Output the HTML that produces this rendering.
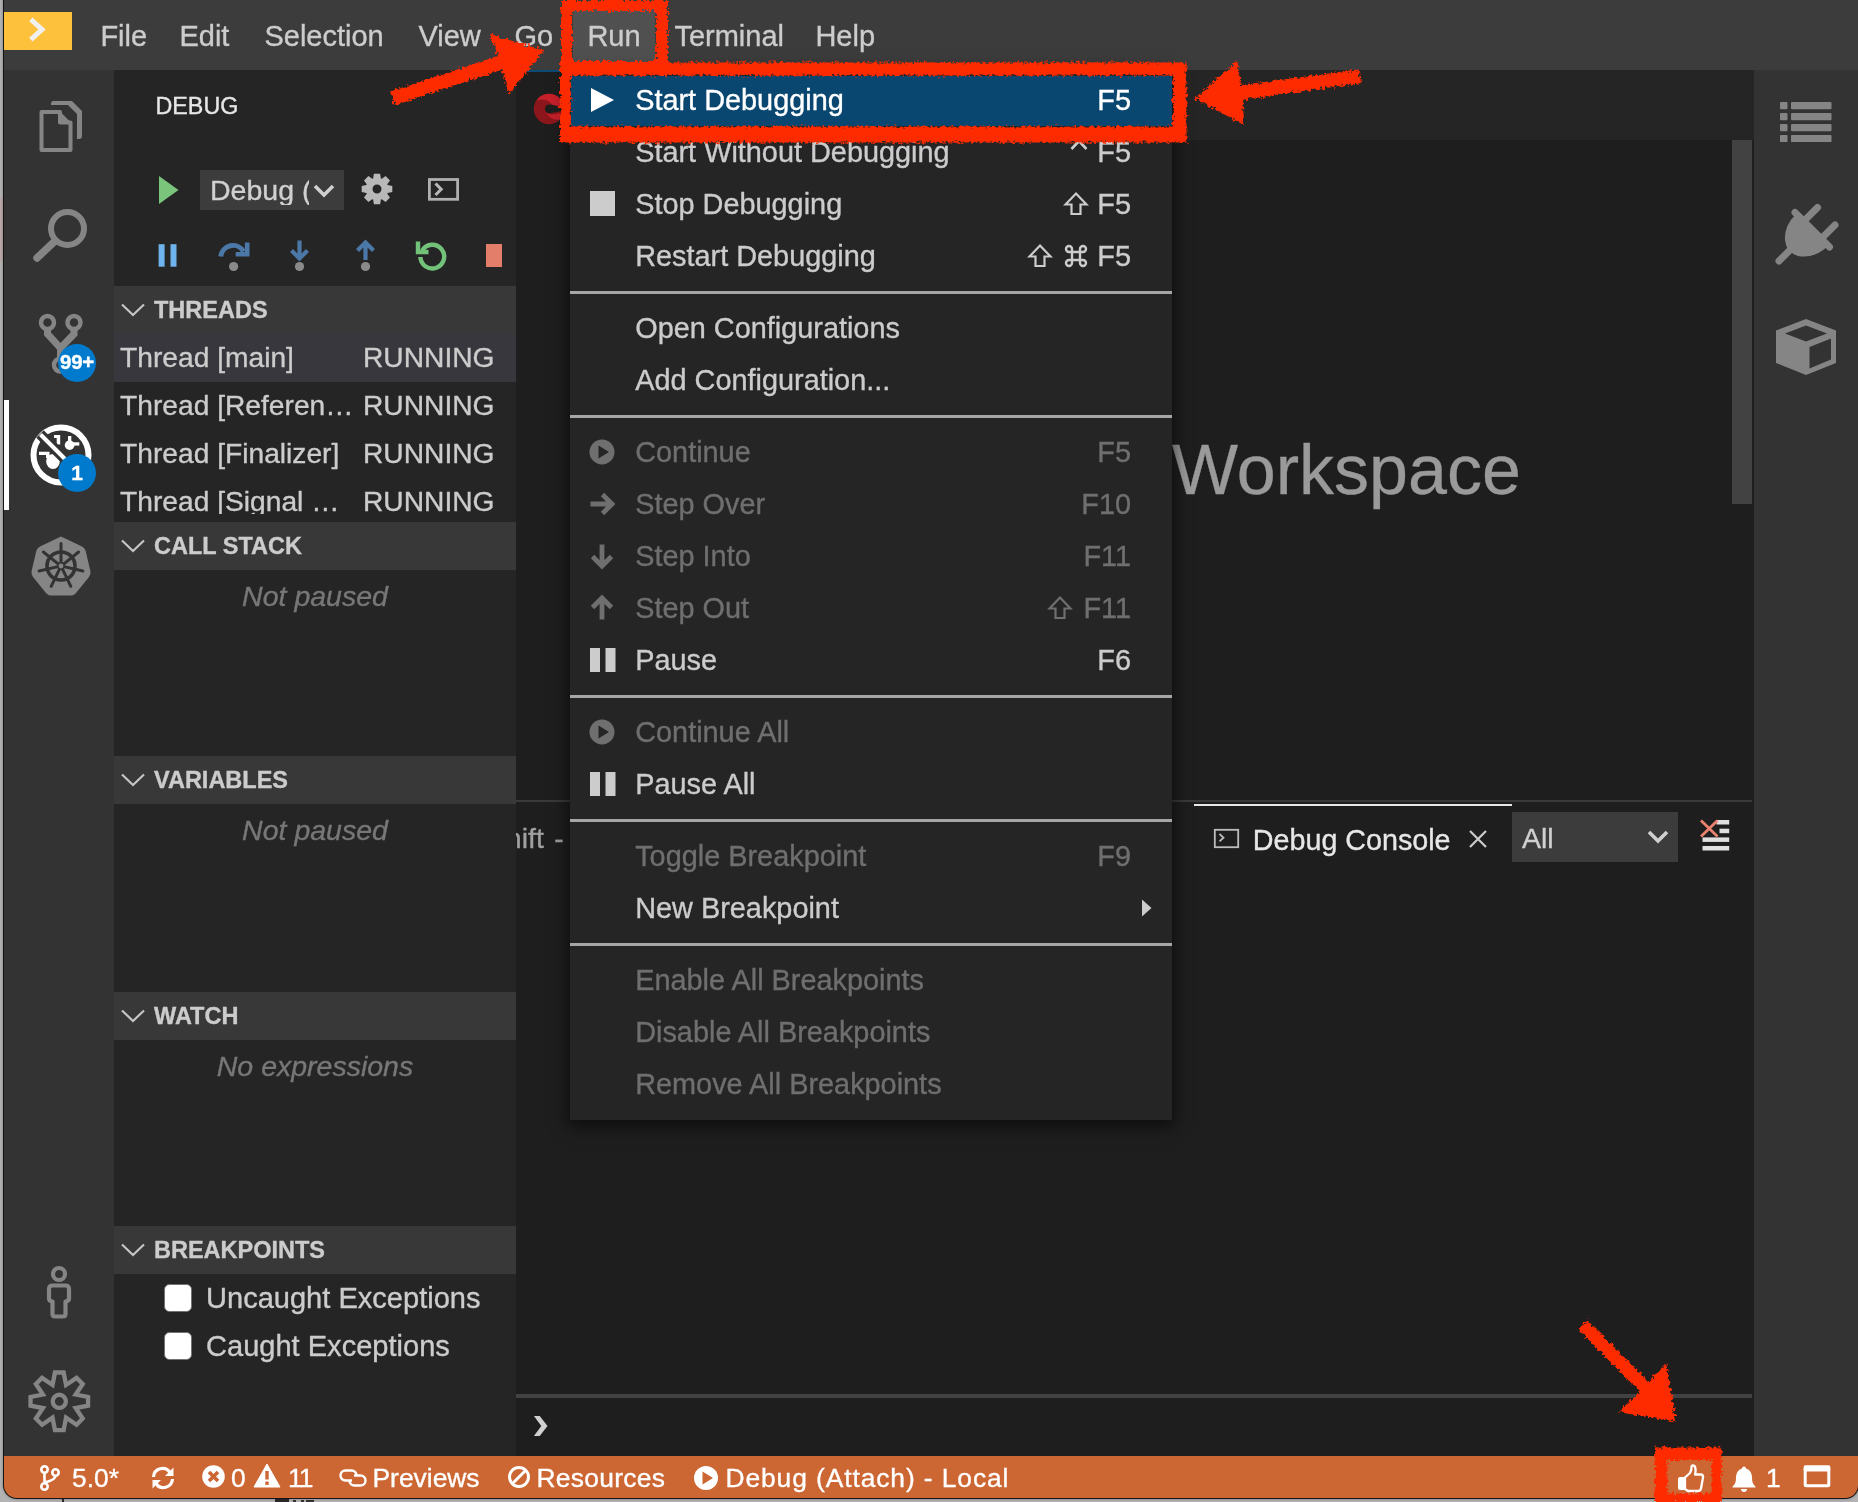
<!DOCTYPE html>
<html><head><meta charset="utf-8"><title>Debug</title>
<style>
*{box-sizing:border-box;margin:0;padding:0}
html,body{width:1858px;height:1502px;overflow:hidden;background:#b3b3b3}
body{-webkit-text-stroke:0.350px currentColor;position:relative;font-family:"Liberation Sans",sans-serif;font-size:28.5px;color:#ccc;line-height:1;-webkit-font-smoothing:antialiased}
.a{position:absolute}
.t{position:absolute;white-space:nowrap}
#win{left:4px;top:0;width:1854px;height:1497.500px;background:#1e1e1e;border-radius:0 0 13px 13px;overflow:hidden;box-shadow:0 0 0 1px #151515,0 0 3px 1px rgba(0,0,0,0.35)}
#edge{left:3px;top:0;width:1px;height:1490px;background:#111}
#in{left:-4px;top:0;width:1858px;height:1502px;will-change:transform}
#menubar{left:4px;top:0;width:1854px;height:70px;background:#3c3c3c}
#act{left:4px;top:70px;width:110px;height:1386px;background:#333}
#side{left:114px;top:70px;width:402px;height:1386px;background:#252526}
#tabs{left:516px;top:70px;width:1238px;height:70px;background:#252526}
#rbar{left:1754px;top:70px;width:104px;height:1386px;background:#333}
#status{left:4px;top:1456px;width:1854px;height:42px;background:#cc6633}
.sb{top:9.300px;font-size:26.400px;color:#fff}
.mi{top:21.600px;margin-left:-0.600px;font-size:29px;color:#ccc}
.hdr{left:0;width:402px;height:48px;background:#383838}
.hdr .t{left:40px;top:13px;font-size:23.5px;font-weight:bold;color:#ccc}
.row{left:0;width:402px;height:48px}
.row .t{top:8.800px;font-size:28.2px;color:#ccc}
.ital{font-style:italic;color:#777;font-size:28.5px;width:402px;text-align:center;left:0}
</style></head>
<body>
<div class="a" style="left:0;top:198px;width:3px;height:64px;background:#b9aaa8"></div>
<div class="a" style="left:62px;top:1499px;width:2px;height:3px;background:#2a2a2a"></div><div class="a" style="left:275px;top:1499px;width:14px;height:2.500px;background:#2a2a2a"></div><div class="a" style="left:293px;top:1500px;width:3px;height:2px;background:#333"></div><div class="a" style="left:301px;top:1500px;width:3px;height:2px;background:#333"></div><div class="a" style="left:306px;top:1500px;width:8px;height:2px;background:#333"></div>
<div class="a" id="win"><div class="a" id="in">
<div class="a" id="menubar">
<div class="a" style="left:0;top:12px;width:68px;height:38px;background:#fdc13c"></div>
<svg class="a" style="left:0;top:12px" width="68" height="38" viewBox="0 0 68 38"><path d="M26.800 7.300 L38 17.500 L26.800 27.700" fill="none" stroke="#f0f0f0" stroke-width="5" stroke-linecap="butt" stroke-linejoin="miter"/></svg>
<div class="a" style="left:569px;top:5px;width:82px;height:60px;background:#505050"></div>
<div class="t mi" style="left:97px">File</div>
<div class="t mi" style="left:176px">Edit</div>
<div class="t mi" style="left:261px">Selection</div>
<div class="t mi" style="left:415px">View</div>
<div class="t mi" style="left:511px">Go</div>
<div class="t mi" style="left:584px">Run</div>
<div class="t mi" style="left:671px">Terminal</div>
<div class="t mi" style="left:812px">Help</div>
</div>
<div class="a" id="act">
<div class="a" style="left:0;top:330px;width:5px;height:110px;background:#fff"></div>
<!-- files -->
<svg class="a" style="left:33px;top:28.500px" width="48" height="58" viewBox="0 0 48 58"><path d="M14 6 V4.5 Q14 2 16.5 2 H35 L45 12 V37 Q45 40 42 40 H40 V15 L31 6 Z" fill="#858585"/><path d="M4.500 13 H23 V23.500 H33.500 V51 H4.500 Z" fill="none" stroke="#858585" stroke-width="4" stroke-linejoin="round"/><path d="M22 11.500 L35 24.500 H22 Z" fill="#858585"/></svg>
<!-- search -->
<svg class="a" style="left:26.800px;top:136.600px" width="58" height="58" viewBox="0 0 58 58"><circle cx="36.5" cy="21.5" r="16.5" fill="none" stroke="#858585" stroke-width="6"/><path d="M24 34 L6 51" stroke="#858585" stroke-width="7.5" stroke-linecap="round"/></svg>
<!-- git -->
<svg class="a" style="left:34.300px;top:242px" width="48" height="64" viewBox="0 0 48 64"><g fill="none" stroke="#858585"><circle cx="9.500" cy="10.500" r="6.5" stroke-width="4.5"/><circle cx="36" cy="10.500" r="6.5" stroke-width="4.500"/><circle cx="22.500" cy="53" r="6.5" stroke-width="4.5"/><path d="M9.500 17 V22 L22.500 36 V46 M36 17 V22 L22.500 36" stroke-width="7" stroke-linejoin="miter"/></g></svg>
<div class="a" style="left:54px;top:274px;width:38px;height:38px;border-radius:19px;background:#007acc"></div>
<div class="t" style="left:53px;top:282px;width:40px;text-align:center;font-size:20.500px;font-weight:bold;color:#fff;letter-spacing:-0.3px">99+</div>
<!-- debug -->
<svg class="a" style="left:22.700px;top:350.900px" width="68" height="68" viewBox="-34 -34 68 68"><circle r="27.500" fill="none" stroke="#fff" stroke-width="6"/><g fill="#fff"><ellipse cx="-8" cy="6.500" rx="6.800" ry="7.600"/><circle cx="8.600" cy="-9.800" r="4.800"/><path d="M-22 -3.300 H-11.500 V3 H-15 V0 H-22 Z"/><path d="M-7 -20 H-0.800 V-10.500 H-4.300 V-17 H-7 Z"/><rect x="7" y="-19" width="3.300" height="6"/><rect x="10" y="-12.700" width="8.300" height="3.300"/></g><path d="M-21 -21 L10 10" stroke="#333" stroke-width="10.500"/><path d="M-20.500 -20.500 L10 10" stroke="#fff" stroke-width="4"/></svg>
<div class="a" style="left:54px;top:384px;width:38px;height:38px;border-radius:19px;background:#007acc"></div>
<div class="t" style="left:54px;top:392px;width:38px;text-align:center;font-size:21px;font-weight:bold;color:#fff">1</div>
<!-- kubernetes -->
<svg class="a" style="left:25.900px;top:465px" width="62" height="62" viewBox="-31 -31 62 62"><path d="M0 -29.500 L21 -19.500 Q24 -18 24.700 -15 L29.500 5.500 Q30 8.500 28 11 L15 27 Q13 29.500 10 29.500 H-10 Q-13 29.500 -15 27 L-28 11 Q-30 8.500 -29.500 5.500 L-24.700 -15 Q-24 -18 -21 -19.500 Z" fill="#858585"/><g fill="none" stroke="#333"><circle r="14" stroke-width="3.600"/><path d="M0.0 -2.0 L0.0 -22.5 M1.6 -1.2 L17.6 -14.0 M1.9 0.4 L21.9 5.0 M0.9 1.8 L9.8 20.3 M-0.9 1.8 L-9.8 20.3 M-1.9 0.4 L-21.9 5.0 M-1.6 -1.2 L-17.6 -14.0" stroke-width="3" stroke-linecap="round"/></g><circle r="4" fill="#333"/><circle r="2.400" fill="#858585"/></svg>
<!-- person -->
<svg class="a" style="left:40px;top:1194px" width="30" height="56" viewBox="0 0 30 56"><g fill="none" stroke="#858585" stroke-width="4.200"><circle cx="15" cy="10" r="6"/><path d="M8.500 21.500 H21.500 Q25 21.500 25 25 V34.500 Q25 37 21.500 37.500 V50 Q21.500 52.500 19 52.500 H11 Q8.500 52.500 8.500 50 V37.500 Q5 37 5 34.500 V25 Q5 21.500 8.500 21.500 Z" stroke-linejoin="round"/></g></svg>
<!-- gear -->
<svg class="a" style="left:21.700px;top:1297.600px" width="66.600" height="66.600" viewBox="-33 -33 66 66"><g fill="none" stroke="#858585" stroke-width="4.300" stroke-linejoin="miter"><path d="M-4.3 -28.5 L4.3 -28.5 L6.7 -16.2 L17.1 -23.2 L23.2 -17.1 L16.2 -6.7 L28.5 -4.3 L28.5 4.3 L16.2 6.7 L23.2 17.1 L17.1 23.2 L6.7 16.2 L4.3 28.5 L-4.3 28.5 L-6.7 16.2 L-17.1 23.2 L-23.2 17.1 L-16.2 6.7 L-28.5 4.3 L-28.5 -4.3 L-16.2 -6.7 L-23.2 -17.1 L-17.1 -23.2 L-6.7 -16.2 Z"/><circle r="6.500"/></g></svg>
</div>
<div class="a" id="side">
<div class="t" style="left:41.500px;top:24.600px;font-size:23.300px;color:#e7e7e7">DEBUG</div>
<svg class="a" style="left:44px;top:105px" width="22" height="30" viewBox="0 0 22 30"><path d="M1 1 L20.500 15 L1 29 Z" fill="#7bc47b"/></svg>
<div class="a" style="left:86px;top:100px;width:144px;height:40px;background:#3c3c3c;overflow:hidden"><div class="t" style="left:10px;top:6px;font-size:28.500px;color:#d0d0d0;width:99px;overflow:hidden">Debug (Attach)</div><svg class="a" style="left:113px;top:14px" width="22" height="14" viewBox="0 0 22 14"><path d="M2 2 L11 11 L20 2" fill="none" stroke="#d0d0d0" stroke-width="3.600"/></svg></div>
<svg class="a" style="left:247.450px;top:103.400px" width="32" height="32" viewBox="-16 -16 32 32"><path d="M-3.9 -10.6 L-3.1 -15.3 L3.1 -15.3 L3.9 -10.6 L4.8 -10.2 L8.6 -13.0 L13.0 -8.6 L10.2 -4.8 L10.6 -3.9 L15.3 -3.1 L15.3 3.1 L10.6 3.9 L10.2 4.8 L13.0 8.6 L8.6 13.0 L4.8 10.2 L3.9 10.6 L3.1 15.3 L-3.1 15.3 L-3.9 10.6 L-4.8 10.2 L-8.6 13.0 L-13.0 8.6 L-10.2 4.8 L-10.6 3.9 L-15.3 3.1 L-15.3 -3.1 L-10.6 -3.9 L-10.2 -4.8 L-13.0 -8.6 L-8.6 -13.0 L-4.8 -10.2 Z M4.5 0 A4.5 4.5 0 1 0 -4.5 0 A4.5 4.5 0 1 0 4.5 0 Z" fill="#b8b8b8" fill-rule="evenodd"/></svg>
<svg class="a" style="left:313px;top:107px" width="34" height="26" viewBox="0 0 34 26"><rect x="2.400" y="2.500" width="28.200" height="19.800" fill="none" stroke="#b0b0b0" stroke-width="2.800"/><path d="M8.500 6.500 L14.200 12.300 L8.500 18" fill="none" stroke="#b8b8b8" stroke-width="3"/></svg>
<svg class="a" style="left:40.200px;top:172px" width="24" height="26" viewBox="0 0 24 26"><rect x="4.600" y="2.200" width="6" height="22.500" fill="#6eb3ee"/><rect x="17" y="2.200" width="6" height="22.500" fill="#6eb3ee" transform="translate(-0.500 0)"/></svg>
<svg class="a" style="left:102px;top:168px" width="36" height="36" viewBox="0 0 36 36"><path d="M4.800 18.500 A12.200 12.200 0 0 1 27.500 13.500" fill="none" stroke="#4b78a6" stroke-width="5"/><path d="M31.200 4.500 V16.300 H19.700" fill="none" stroke="#4b78a6" stroke-width="4.600"/><circle cx="17.600" cy="28.500" r="4.600" fill="#8a8a8a"/></svg>
<svg class="a" style="left:172px;top:168px" width="28" height="36" viewBox="0 0 28 36"><path d="M13.500 2.500 V19.500 M5.500 12.500 L13.500 20.500 L21.500 12.500" fill="none" stroke="#4b78a6" stroke-width="4.200"/><circle cx="13.500" cy="28.500" r="4.600" fill="#8a8a8a"/></svg>
<svg class="a" style="left:238px;top:168px" width="28" height="36" viewBox="0 0 28 36"><path d="M13.500 22 V5 M5.500 12.500 L13.500 4.500 L21.500 12.500" fill="none" stroke="#4b78a6" stroke-width="4.200"/><circle cx="13.500" cy="28.500" r="4.600" fill="#8a8a8a"/></svg>
<svg class="a" style="left:300px;top:168px" width="36" height="36" viewBox="0 0 36 36"><path d="M7.800 11.800 A11.900 11.900 0 1 1 6 18.500" fill="none" stroke="#73c27a" stroke-width="4.400" transform="translate(0.400 0.500)"/><path d="M4 3.500 V14 H14.500" fill="none" stroke="#73c27a" stroke-width="4.400"/></svg>
<div class="a" style="left:372.300px;top:174.300px;width:16px;height:22.600px;background:#e27e6a"></div>
<div class="a hdr" style="top:216px"><svg class="a" style="left:7px;top:17px" width="24" height="14" viewBox="0 0 24 14"><path d="M1 1.500 L12 12 L23 1.500" fill="none" stroke="#c5c5c5" stroke-width="2.200"/></svg><div class="t">THREADS</div></div>
<div class="a row" style="top:264px;background:#37373d;"><div class="t" style="left:6px">Thread [main]</div><div class="t" style="left:249px">RUNNING</div></div>
<div class="a row" style="top:312px;"><div class="t" style="left:6px">Thread [Referen…</div><div class="t" style="left:249px">RUNNING</div></div>
<div class="a row" style="top:360px;"><div class="t" style="left:6px">Thread [Finalizer]</div><div class="t" style="left:249px">RUNNING</div></div>
<div class="a row" style="top:408px;height:36px;overflow:hidden;"><div class="t" style="left:6px">Thread [Signal …</div><div class="t" style="left:249px">RUNNING</div></div>
<div class="a hdr" style="top:452px"><svg class="a" style="left:7px;top:17px" width="24" height="14" viewBox="0 0 24 14"><path d="M1 1.500 L12 12 L23 1.500" fill="none" stroke="#c5c5c5" stroke-width="2.200"/></svg><div class="t">CALL STACK</div></div>
<div class="t ital" style="top:512px">Not paused</div>
<div class="a hdr" style="top:686px"><svg class="a" style="left:7px;top:17px" width="24" height="14" viewBox="0 0 24 14"><path d="M1 1.500 L12 12 L23 1.500" fill="none" stroke="#c5c5c5" stroke-width="2.200"/></svg><div class="t">VARIABLES</div></div>
<div class="t ital" style="top:746px">Not paused</div>
<div class="a hdr" style="top:922px"><svg class="a" style="left:7px;top:17px" width="24" height="14" viewBox="0 0 24 14"><path d="M1 1.500 L12 12 L23 1.500" fill="none" stroke="#c5c5c5" stroke-width="2.200"/></svg><div class="t">WATCH</div></div>
<div class="t ital" style="top:982px">No expressions</div>
<div class="a hdr" style="top:1156px"><svg class="a" style="left:7px;top:17px" width="24" height="14" viewBox="0 0 24 14"><path d="M1 1.500 L12 12 L23 1.500" fill="none" stroke="#c5c5c5" stroke-width="2.200"/></svg><div class="t">BREAKPOINTS</div></div>
<div class="a" style="left:51px;top:1215px;width:27.600px;height:27.600px;margin:-0.800px 0 0 -0.800px;border-radius:5.500px;background:#fff;border:1.800px solid #727272"></div><div class="t" style="left:92px;top:1213.5px;font-size:29.050px;color:#ccc">Uncaught Exceptions</div>
<div class="a" style="left:51px;top:1263px;width:27.600px;height:27.600px;margin:-0.800px 0 0 -0.800px;border-radius:5.500px;background:#fff;border:1.800px solid #727272"></div><div class="t" style="left:92px;top:1261.5px;font-size:29.050px;color:#ccc">Caught Exceptions</div>
</div>
<div class="a" id="tabs"></div>
<div class="a" style="left:516px;top:70px;width:656px;height:70px;background:#1e1e1e"></div>
<div class="a" style="left:516px;top:70px;width:656px;height:2px;background:#0b4a75"></div>
<svg class="a" style="left:528.700px;top:89.200px" width="40" height="40" viewBox="-20 -20 40 40"><circle r="15.200" fill="#8b171c"/><path d="M-12.300 -9 A15.200 15.200 0 0 1 15.200 0 L15.200 -1.500 L3 -4.500 Q0 -8.500 -5 -9.200 Q-9 -9.800 -12.300 -9 Z" fill="#c6202b"/><path d="M-3.500 3 Q0 6.500 5 5.500 L15 3.500 A15.200 15.200 0 0 1 11 10.500 Q2 12 -3.500 3 Z" fill="#c6202b"/><path d="M-4 -0.200 Q-4 -4.500 1 -4.500 L16 -1.200 V1.400 L1 4.300 Q-4 4.300 -4 -0.200 Z" fill="#1e1e1e"/></svg>
<div class="t" style="left:1172px;top:434.500px;font-size:70px;color:#9a9a9a">Workspace</div>
<div class="a" style="left:1732px;top:140px;width:20px;height:364px;background:#424242"></div>
<div class="a" style="left:516px;top:799.500px;width:1236px;height:2px;background:#3a3a3a"></div>
<div class="a" style="left:516px;top:815px;width:60px;height:44px;overflow:hidden"><div class="t" style="right:12.200px;top:9px;font-size:28.500px;color:#a0a0a0;word-spacing:2.600px">OpenShift -</div></div>
<div class="a" style="left:1194px;top:804px;width:318px;height:2px;background:#e7e7e7"></div>
<svg class="a" style="left:1212.600px;top:828px" width="28" height="22" viewBox="0 0 28 22"><rect x="1.800" y="1.800" width="23.400" height="17.400" fill="none" stroke="#bdbdbd" stroke-width="1.800"/><path d="M6.500 6 L10.500 9.700 L6.500 13.400" fill="none" stroke="#bdbdbd" stroke-width="1.800"/></svg>
<div class="t" style="left:1252.800px;top:826px;font-size:28.700px;color:#e7e7e7">Debug Console</div>
<svg class="a" style="left:1468px;top:829px" width="20" height="20" viewBox="0 0 20 20"><path d="M2 2 L18 18 M18 2 L2 18" stroke="#ccc" stroke-width="2.200"/></svg>
<div class="a" style="left:1512px;top:812px;width:166px;height:50px;background:#3c3c3c"></div>
<div class="t" style="left:1522px;top:824px;font-size:28.500px;color:#d0d0d0">All</div>
<svg class="a" style="left:1646px;top:829px" width="24" height="16" viewBox="0 0 24 16"><path d="M3 3 L12 12 L21 3" fill="none" stroke="#d0d0d0" stroke-width="3.600"/></svg>
<svg class="a" style="left:1698px;top:818px" width="34" height="36" viewBox="0 0 34 36"><g fill="#e0e0e0"><rect x="18.500" y="2" width="12.700" height="4.500"/><rect x="21.500" y="10.700" width="9.700" height="4.500"/><rect x="4.500" y="19.400" width="26.700" height="4.500"/><rect x="4.500" y="28" width="26.700" height="4.500"/></g><path d="M3 2.500 L19.500 18.500 M19.500 2.500 L3 18.500" stroke="#ea836e" stroke-width="2.800"/></svg>
<div class="a" style="left:516px;top:1394px;width:1236px;height:4.400px;background:#424242"></div>
<svg class="a" style="left:530px;top:1410px" width="24" height="30" viewBox="530 1410 24 30"><path d="M533.900 1415.900 H539.700 L547.500 1425.900 L539.700 1436 H533.900 L541.300 1425.900 Z" fill="#d0d0d0"/></svg>

<div class="a" id="rbar">
<svg class="a" style="left:26px;top:32px" width="52" height="40" viewBox="0 0 52 40"><g fill="#858585"><rect x="0" y="0" width="7.500" height="7.300" rx="1"/><rect x="11" y="0" width="40.500" height="7.300" rx="1"/><rect x="0" y="11" width="7.500" height="7.300" rx="1"/><rect x="11" y="11" width="40.500" height="7.300" rx="1"/><rect x="0" y="22" width="7.500" height="7.300" rx="1"/><rect x="11" y="22" width="40.500" height="7.300" rx="1"/><rect x="0" y="33" width="7.500" height="7.300" rx="1"/><rect x="11" y="33" width="40.500" height="7.300" rx="1"/></g></svg>
<svg class="a" style="left:20px;top:132px" width="66" height="66" viewBox="0 0 66 66"><g stroke="#858585" stroke-width="7" stroke-linecap="round" fill="none"><path d="M5 59 L17 47"/><path d="M28 21 L43.500 5.500"/><path d="M45.500 38.500 L61 23"/><path d="M21 10.500 L55.500 45"/></g><path d="M22 12 L54 44 Q40 57 24 54 Q12 50 11 38 Q10 24 22 12 Z" fill="#858585"/></svg>
<svg class="a" style="left:20px;top:247px" width="64" height="60" viewBox="0 0 64 60"><path d="M32 2 L62 13.500 V46 L32 58 L2 46 V13.500 Z" fill="#858585"/><path d="M32 8.500 L53 16.500 L32 24.500 L11 16.500 Z" fill="#333"/><path d="M35.500 30 L57 21.500 V42.500 L35.500 51.500 Z" fill="#333"/></svg>
</div>
<div class="a" id="status">
<svg class="a" style="left:34px;top:8px" width="24" height="28" viewBox="0 0 24 28"><g fill="none" stroke="#fff" stroke-width="2.600"><circle cx="6.500" cy="5.500" r="3.200"/><circle cx="6.500" cy="22.500" r="3.200"/><circle cx="17.500" cy="8.500" r="3.200"/><path d="M6.500 8.700 V19.300 M17.500 11.700 Q17.500 16 6.500 18.500"/></g></svg>
<div class="t sb" style="left:68px">5.0*</div>
<svg class="a" style="left:146px;top:10px" width="26" height="24" viewBox="0 0 26 24"><g fill="none" stroke="#fff" stroke-width="3.200"><path d="M3.500 11 A9 9 0 0 1 20 6.500"/><path d="M22.500 13 A9 9 0 0 1 6 17.500"/></g><path d="M23.500 1.500 V10 H15 Z" fill="#fff"/><path d="M2.500 22.500 V14 H11 Z" fill="#fff"/></svg>
<svg class="a" style="left:197px;top:8px" width="25" height="25" viewBox="0 0 25 25"><circle cx="12.500" cy="12.500" r="11.300" fill="#fff"/><path d="M8 8 L17 17 M17 8 L8 17" stroke="#cc6633" stroke-width="3.600"/></svg>
<div class="t sb" style="left:227px">0</div>
<svg class="a" style="left:249px;top:7px" width="28" height="25" viewBox="0 0 28 25"><path d="M14 1 L27 24 H1 Z" fill="#fff" stroke="#fff" stroke-width="1" stroke-linejoin="round"/><rect x="12.300" y="8" width="3.400" height="8.500" fill="#cc6633"/><rect x="12.300" y="18.500" width="3.400" height="3.400" fill="#cc6633"/></svg>
<div class="t sb" style="left:284px;letter-spacing:-2px">11</div>
<svg class="a" style="left:335px;top:11px" width="28" height="22" viewBox="0 0 28 22"><g fill="none" stroke="#fff" stroke-width="2.400"><path d="M13 13.500 H6.500 A5 5 0 0 1 6.500 3.500 H12.500 A5 5 0 0 1 17.500 8.500"/><path d="M14.500 7.500 H21 A5 5 0 0 1 21 17.500 H15 A5 5 0 0 1 10 12.500" transform="translate(0.500 1)"/></g></svg>
<div class="t sb" style="left:368.500px">Previews</div>
<svg class="a" style="left:503px;top:9px" width="24" height="24" viewBox="0 0 24 24"><circle cx="12" cy="12" r="9.500" fill="none" stroke="#fff" stroke-width="3"/><path d="M18.500 5.500 L5.500 18.500" stroke="#fff" stroke-width="3"/></svg>
<div class="t sb" style="left:532.500px;letter-spacing:0.300px">Resources</div>
<svg class="a" style="left:689px;top:9px" width="26" height="26" viewBox="0 0 26 26"><circle cx="13" cy="13" r="12" fill="#fff"/><path d="M9.500 6.500 L20 13 L9.500 19.500 Z" fill="#cc6633"/></svg>
<div class="t sb" style="left:721.500px;letter-spacing:0.900px">Debug (Attach) - Local</div>
<!-- right -->
<svg class="a" style="left:1672px;top:7px" width="30" height="30" viewBox="0 0 30 30"><g fill="none" stroke="#fff" stroke-width="2.300" stroke-linejoin="round"><path d="M9 14.500 L14 10 Q16 6 15.500 3.500 Q16.500 1.500 18.500 3 Q20.500 6 19 11.500 H25 Q27.500 12 27 14.500 L25 25.500 Q24.500 28 22 28 H12 L9 26 Z"/></g><rect x="2" y="14" width="7.500" height="13" rx="2" fill="#fff"/></svg>
<svg class="a" style="left:1727px;top:9px" width="26" height="28" viewBox="0 0 26 28"><path d="M13 1.500 Q14.800 1.500 15 3.500 Q21 5.500 21 13 Q21 19 24.500 21.500 V22.500 H1.500 V21.500 Q5 19 5 13 Q5 5.500 11 3.500 Q11.200 1.500 13 1.500 Z" fill="#fff"/><path d="M9.800 24 H16.200 Q15.500 27 13 27 Q10.500 27 9.800 24 Z" fill="#fff"/></svg>
<div class="t sb" style="left:1762px">1</div>
<svg class="a" style="left:1799px;top:9px" width="28" height="24" viewBox="0 0 28 24"><rect x="2.200" y="3" width="23.600" height="17.800" rx="1" fill="none" stroke="#fff" stroke-width="3"/><rect x="0.700" y="0.300" width="26.600" height="6.200" rx="1.500" fill="#fff"/></svg>
</div>
<div class="a" style="left:570px;top:70px;width:602px;height:1050px;background:#252526;box-shadow:0 4px 16px 2px rgba(0,0,0,0.6)"></div>
<div class="a" style="left:571px;top:76px;width:601px;height:50px;background:#094771"></div>
<div class="a" style="left:570px;top:291.3px;width:602px;height:2.500px;background:#a6a6a6"></div>
<div class="a" style="left:570px;top:415.3px;width:602px;height:2.500px;background:#a6a6a6"></div>
<div class="a" style="left:570px;top:695.3px;width:602px;height:2.500px;background:#a6a6a6"></div>
<div class="a" style="left:570px;top:819.3px;width:602px;height:2.500px;background:#a6a6a6"></div>
<div class="a" style="left:570px;top:943.3px;width:602px;height:2.500px;background:#a6a6a6"></div>
<div class="t" style="left:635.200px;top:85.9px;font-size:28.860px;color:#fff">Start Debugging</div><svg class="a" style="left:590px;top:87px" width="26" height="26" viewBox="0 0 26 26"><path d="M1 1 L24 13 L1 25 Z" fill="#fff"/></svg><div class="t" style="right:727px;top:85.9px;font-size:28.860px;color:#fff">F5</div>
<div class="t" style="left:635.200px;top:137.9px;font-size:28.860px;color:#ccc">Start Without Debugging</div><div class="t" style="right:727px;top:137.9px;font-size:28.860px;color:#ccc">F5</div><svg class="a" style="left:1066.500px;top:137px" width="24" height="16" viewBox="0 0 24 16"><path d="M4.500 12 L12 4 L19.500 12" fill="none" stroke="#ccc" stroke-width="2.600"/></svg>
<div class="t" style="left:635.200px;top:189.9px;font-size:28.860px;color:#ccc">Stop Debugging</div><div class="a" style="left:590px;top:191.3px;width:25px;height:25px;background:#ccc"></div><div class="t" style="right:727px;top:189.9px;font-size:28.860px;color:#ccc">F5</div><svg class="a" style="left:1063px;top:191px" width="26" height="26" viewBox="0 0 26 26"><path d="M13 2.500 L23.500 13.500 H17.500 V23 H8.500 V13.500 H2.500 Z" fill="none" stroke="#ccc" stroke-width="2.200" stroke-linejoin="miter"/></svg>
<div class="t" style="left:635.200px;top:241.9px;font-size:28.860px;color:#ccc">Restart Debugging</div><div class="t" style="right:727px;top:241.9px;font-size:28.860px;color:#ccc">F5</div><svg class="a" style="left:1027px;top:243px" width="26" height="26" viewBox="0 0 26 26"><path d="M13 2.500 L23.500 13.500 H17.500 V23 H8.500 V13.500 H2.500 Z" fill="none" stroke="#ccc" stroke-width="2.200" stroke-linejoin="miter"/></svg><svg class="a" style="left:1063px;top:243px" width="26" height="26" viewBox="0 0 26 26"><path d="M9 9 H17 V17 H9 Z M9 9 V6 A3 3 0 1 0 6 9 H9 M17 9 H20 A3 3 0 1 0 17 6 V9 M17 17 V20 A3 3 0 1 0 20 17 H17 M9 17 H6 A3 3 0 1 0 9 20 V17" fill="none" stroke="#ccc" stroke-width="2.400"/></svg>
<div class="t" style="left:635.200px;top:313.9px;font-size:28.860px;color:#ccc">Open Configurations</div>
<div class="t" style="left:635.200px;top:365.9px;font-size:28.860px;color:#ccc">Add Configuration...</div>
<div class="t" style="left:635.200px;top:437.9px;font-size:28.860px;color:#6f6f6f">Continue</div><svg class="a" style="left:589px;top:439px" width="26" height="26" viewBox="0 0 26 26"><circle cx="13" cy="13" r="12.500" fill="#6f6f6f"/><path d="M9.500 6.500 L20 13 L9.500 19.500 Z" fill="#252526"/></svg><div class="t" style="right:727px;top:437.9px;font-size:28.860px;color:#6f6f6f">F5</div>
<div class="t" style="left:635.200px;top:489.9px;font-size:28.860px;color:#6f6f6f">Step Over</div><svg class="a" style="left:588px;top:490px" width="28" height="28" viewBox="-14 -14 28 28"><path d="M-11.500 0 H9 M0.500 -9.500 L10 0 L0.500 9.500" fill="none" stroke="#6f6f6f" stroke-width="4.800" transform="rotate(0)"/></svg><div class="t" style="right:727px;top:489.9px;font-size:28.860px;color:#6f6f6f">F10</div>
<div class="t" style="left:635.200px;top:541.9px;font-size:28.860px;color:#6f6f6f">Step Into</div><svg class="a" style="left:588px;top:542px" width="28" height="28" viewBox="-14 -14 28 28"><path d="M-11.500 0 H9 M0.500 -9.500 L10 0 L0.500 9.500" fill="none" stroke="#6f6f6f" stroke-width="4.800" transform="rotate(90)"/></svg><div class="t" style="right:727px;top:541.9px;font-size:28.860px;color:#6f6f6f">F11</div>
<div class="t" style="left:635.200px;top:593.9px;font-size:28.860px;color:#6f6f6f">Step Out</div><svg class="a" style="left:588px;top:594px" width="28" height="28" viewBox="-14 -14 28 28"><path d="M-11.500 0 H9 M0.500 -9.500 L10 0 L0.500 9.500" fill="none" stroke="#6f6f6f" stroke-width="4.800" transform="rotate(-90)"/></svg><div class="t" style="right:727px;top:593.9px;font-size:28.860px;color:#6f6f6f">F11</div><svg class="a" style="left:1047px;top:595px" width="26" height="26" viewBox="0 0 26 26"><path d="M13 2.500 L23.500 13.500 H17.500 V23 H8.500 V13.500 H2.500 Z" fill="none" stroke="#6f6f6f" stroke-width="2.200" stroke-linejoin="miter"/></svg>
<div class="t" style="left:635.200px;top:645.9px;font-size:28.860px;color:#ccc">Pause</div><svg class="a" style="left:589px;top:647px" width="28" height="26" viewBox="0 0 28 26"><rect x="1" y="1" width="10" height="24" fill="#ccc"/><rect x="16.500" y="1" width="10" height="24" fill="#ccc"/></svg><div class="t" style="right:727px;top:645.9px;font-size:28.860px;color:#ccc">F6</div>
<div class="t" style="left:635.200px;top:717.9px;font-size:28.860px;color:#6f6f6f">Continue All</div><svg class="a" style="left:589px;top:719px" width="26" height="26" viewBox="0 0 26 26"><circle cx="13" cy="13" r="12.500" fill="#6f6f6f"/><path d="M9.500 6.500 L20 13 L9.500 19.500 Z" fill="#252526"/></svg>
<div class="t" style="left:635.200px;top:769.9px;font-size:28.860px;color:#ccc">Pause All</div><svg class="a" style="left:589px;top:771px" width="28" height="26" viewBox="0 0 28 26"><rect x="1" y="1" width="10" height="24" fill="#ccc"/><rect x="16.500" y="1" width="10" height="24" fill="#ccc"/></svg>
<div class="t" style="left:635.200px;top:841.9px;font-size:28.860px;color:#6f6f6f">Toggle Breakpoint</div><div class="t" style="right:727px;top:841.9px;font-size:28.860px;color:#6f6f6f">F9</div>
<div class="t" style="left:635.200px;top:893.9px;font-size:28.860px;color:#ccc">New Breakpoint</div><svg class="a" style="left:1140px;top:898px" width="14" height="20" viewBox="0 0 14 20"><path d="M2 1.500 L11.500 10 L2 18.500 Z" fill="#ccc"/></svg>
<div class="t" style="left:635.200px;top:965.9px;font-size:28.860px;color:#6f6f6f">Enable All Breakpoints</div>
<div class="t" style="left:635.200px;top:1017.9px;font-size:28.860px;color:#6f6f6f">Disable All Breakpoints</div>
<div class="t" style="left:635.200px;top:1069.9px;font-size:28.860px;color:#6f6f6f">Remove All Breakpoints</div>

</div></div>
<svg class="a" style="left:0;top:0" width="1858" height="1502" viewBox="0 0 1858 1502">
<defs><filter id="rough" x="-5%" y="-5%" width="110%" height="110%" color-interpolation-filters="sRGB"><feTurbulence type="fractalNoise" baseFrequency="0.35" numOctaves="2" seed="3" result="n"/><feDisplacementMap in="SourceGraphic" in2="n" scale="7" xChannelSelector="R" yChannelSelector="G"/></filter></defs>
<g fill="#ff2b00" filter="url(#rough)">
<path fill-rule="evenodd" d="M561 0 H668 V69 H561 Z M572 11 H656 V61 H572 Z"/>
<path fill-rule="evenodd" d="M560 62.500 H1186.500 V142.500 H560 Z M570.700 75.500 H1172.800 V126.500 H570.700 Z"/>
<path d="M390 91.500 L498 56 L489.600 34.300 L544 50.300 L508.500 94.700 L502.500 69.500 L395 105 Z"/>
<path d="M1195 98.600 L1237.400 60.700 L1241 85 L1358.500 69.500 L1361 83 L1243 99.500 L1244 125 Z"/>
<path d="M1587 1320 L1649 1382 L1666 1362.500 L1676 1421.500 L1618 1412 L1640 1392 L1578 1329 Z"/>
<path fill-rule="evenodd" d="M1655 1447.600 H1721.700 V1503 H1655 Z M1667.400 1460 H1711.800 V1493.500 H1667.400 Z"/>
</g>
</svg>
</body></html>
